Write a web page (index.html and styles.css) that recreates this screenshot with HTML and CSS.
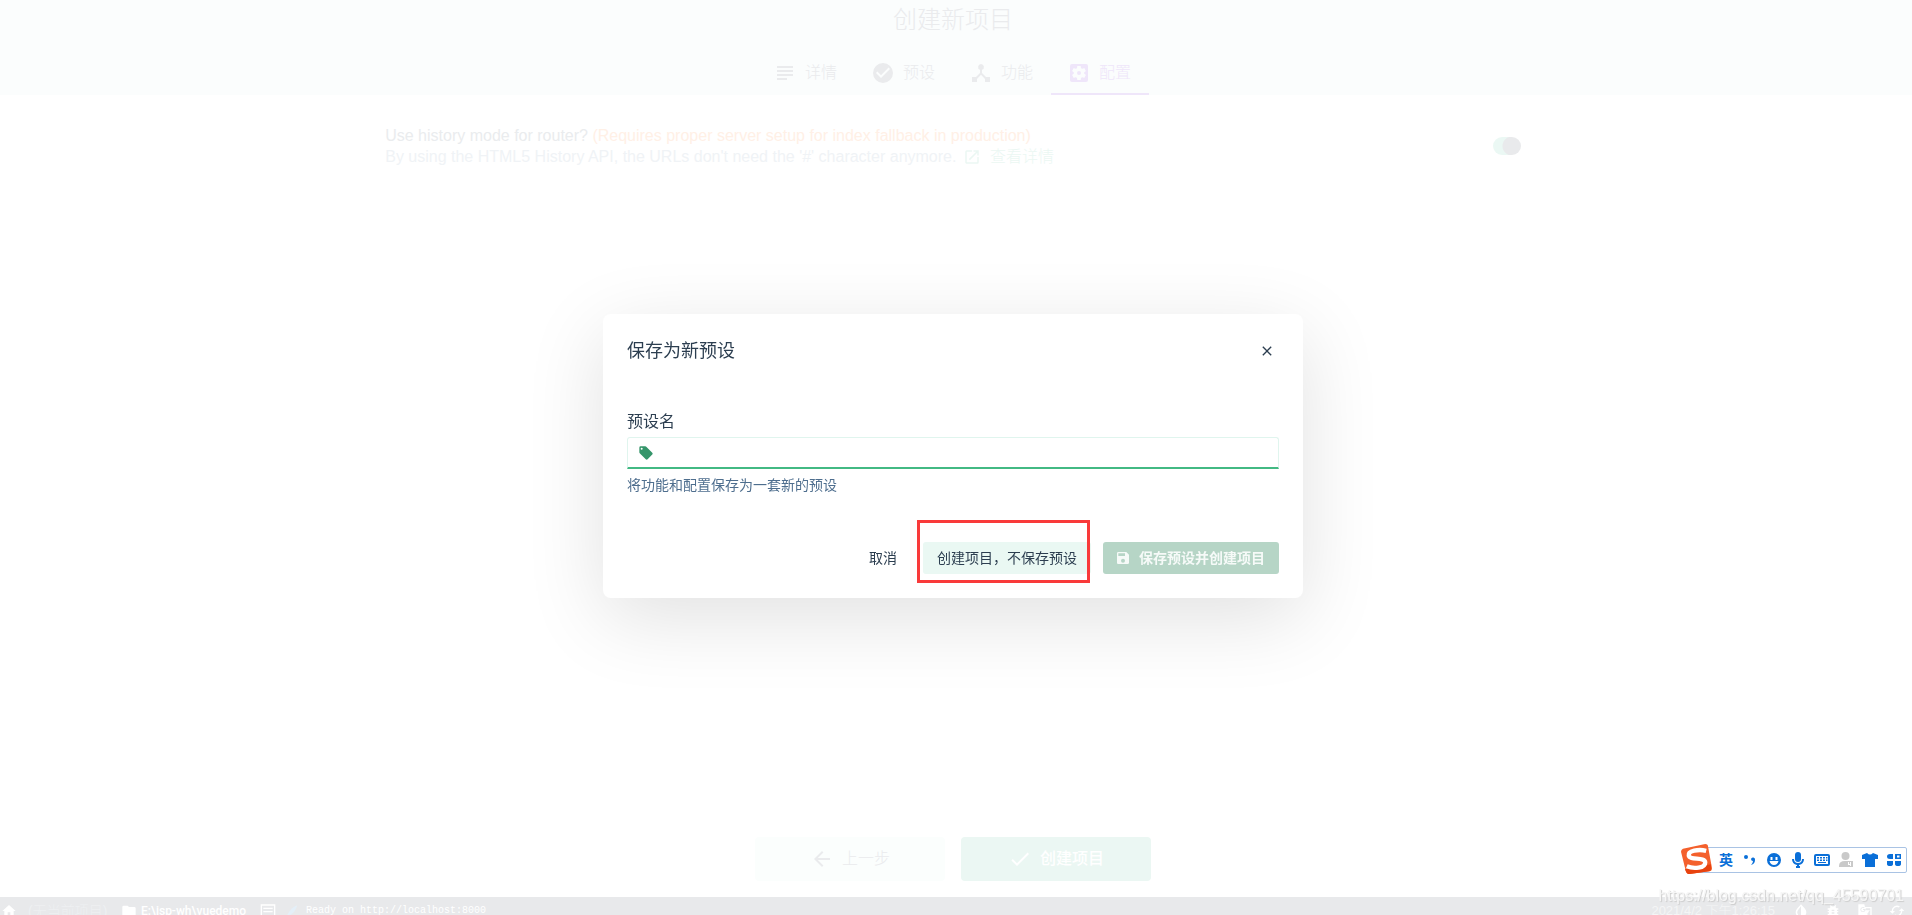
FILE: index.html
```html
<!DOCTYPE html>
<html lang="zh-CN">
<head>
<meta charset="utf-8">
<title>创建新项目</title>
<link rel="stylesheet" href="styles.css">
</head>
<body>
<div class="page">
  <header class="header">
    <h1 class="title">创建新项目</h1>
    <nav class="tabs">
      <button class="tab"><svg viewBox="0 0 24 24"><path d="M14 17H4v2h10zM20 9H4v2h16zM4 15h16v-2H4zM4 5v2h16V5z"/></svg>详情</button>
      <button class="tab"><svg viewBox="0 0 24 24"><path d="M12 2a10 10 0 1 0 0 20 10 10 0 0 0 0-20zm-2 15-5-5 1.4-1.4 3.6 3.6 7.6-7.6L19 8z"/></svg>预设</button>
      <button class="tab"><svg viewBox="0 0 24 24"><path d="m17 16-4-4V8.8A3 3 0 0 0 12 3a3 3 0 0 0-1 5.8V12l-4 4H3v5h5v-3l4-4.200 4 4.200v3h5v-5z"/></svg>功能</button>
      <button class="tab tab-active"><svg viewBox="0 0 24 24"><path d="M12 10a2 2 0 1 0 0 4 2 2 0 0 0 0-4zm7-7H5a2 2 0 0 0-2 2v14c0 1.100.9 2 2 2h14a2 2 0 0 0 2-2V5a2 2 0 0 0-2-2zm-1.750 9-.05.680 1.480 1.160c.13.110.17.300.08.450l-1.400 2.420c-.09.150-.27.210-.43.150l-1.740-.7c-.36.280-.75.510-1.180.690l-.26 1.850c-.03.170-.18.300-.35.300h-2.800c-.17 0-.32-.13-.35-.29l-.26-1.850c-.43-.18-.82-.41-1.180-.69l-1.740.7c-.16.060-.34 0-.43-.15l-1.400-2.420a.35.350 0 0 1 .08-.45l1.480-1.160L6.750 12l.05-.69-1.480-1.160a.35.350 0 0 1-.08-.45l1.400-2.420c.09-.15.27-.21.43-.15l1.740.7c.36-.28.75-.51 1.180-.69l.26-1.850c.03-.17.18-.29.35-.29h2.800c.17 0 .32.130.35.290l.26 1.850c.43.180.82.410 1.180.690l1.740-.7c.16-.06.34 0 .43.150l1.400 2.420c.09.150.05.340-.08.450l-1.480 1.160z"/></svg>配置</button>
    </nav>
  </header>

  <main class="content">
    <section class="prompt">
      <div class="prompt-text">
        <label for="history">Use history mode for router?</label> <span class="warn">(Requires proper server setup for index fallback in production)</span>
        <p class="hint">By using the HTML5 History API, the URLs don't need the '#' character anymore. <a class="more" href="#"><svg viewBox="0 0 24 24"><path d="M19 19H5V5h7V3H5a2 2 0 0 0-2 2v14c0 1.100.9 2 2 2h14a2 2 0 0 0 2-2v-7h-2zM14 3v2h3.600l-9.800 9.800 1.400 1.400L19 6.400V10h2V3z"/></svg>查看详情</a></p>
      </div>
      <input class="switch" type="checkbox" id="history" checked>
    </section>
  </main>

  <footer class="actions">
    <button class="big big-prev"><svg viewBox="0 0 24 24"><path d="M20 11H7.800l5.600-5.600L12 4l-8 8 8 8 1.400-1.400L7.800 13H20z"/></svg>上一步</button>
    <button class="big big-next"><svg viewBox="0 0 24 24"><path d="M9 16.200 4.800 12l-1.400 1.400L9 19 21 7l-1.400-1.400z"/></svg>创建项目</button>
  </footer>

  <div class="status">
    <div class="status-row">
      <svg viewBox="0 0 24 24"><path d="M10 20v-6h4v6h5v-8h3L12 3 2 12h3v8z"/></svg>
      <span class="no-project">(无当前项目)</span>
      <svg viewBox="0 0 24 24"><path d="M10 4H4a2 2 0 0 0-2 2v12c0 1.100.9 2 2 2h16a2 2 0 0 0 2-2V8a2 2 0 0 0-2-2h-8z"/></svg>
      <span class="path">E:\jsp-wh\vuedemo</span>
      <svg viewBox="0 0 24 24"><path fill-rule="evenodd" d="M1 2h22v18H1zM3 4v14h18V4zM5 7h14v2H5zM5 12h14v2H5z"/></svg>
      <svg class="brush" viewBox="0 0 24 24"><path d="M21 2C13 5 7 11 3 21l3-2c7-1 12-7 15-17z"/></svg>
      <span class="log">Ready on http://localhost:8000</span>
      <span class="date">2021/4/2 下午1:26:15</span>
      <span class="tools">
        <svg viewBox="0 0 24 24"><path fill-rule="evenodd" d="m12 2-6 6.500a8 8 0 1 0 12 0zM12 5v15a6 6 0 0 1-4-10z"/></svg>
        <svg viewBox="0 0 24 24"><path d="M20 8h-2.800a6 6 0 0 0-1.800-2L17 4.400 15.600 3l-2.200 2.200a6 6 0 0 0-2.800 0L8.400 3 7 4.400 8.600 6a6 6 0 0 0-1.800 2H4v2h2v2H4v2h2v2H4v2h2.800a6 6 0 0 0 10.400 0H20v-2h-2v-2h2v-2h-2v-2h2zm-6 8h-4v-2h4zm0-4h-4v-2h4z"/></svg>
        <svg viewBox="0 0 24 24"><path fill-rule="evenodd" d="M2 2h9l1 4h10v16H13l-1-4H2zM5 10a4 4 0 1 0 8-1H9v1.500h2.300A2.500 2.500 0 1 1 10.500 8l1-1A4 4 0 0 0 5 10zm8-2 3 10-2 2h6V8zM14 11h5v1h-1l-2 4-2-4z"/></svg>
        <svg viewBox="0 0 24 24"><path d="m19 8-4 4h3a6 6 0 0 1-8.800 5.300l-1.500 1.500A8 8 0 0 0 20 12h3zM6 12a6 6 0 0 1 8.800-5.300l1.500-1.500A8 8 0 0 0 4 12H1l4 4 4-4z"/></svg>
      </span>
    </div>
  </div>
</div>

<div class="overlay">
  <form class="modal" role="dialog" aria-labelledby="dlg">
    <div class="modal-head">
      <h2 class="modal-title" id="dlg">保存为新预设</h2>
      <button class="close" type="button" aria-label="关闭"><svg viewBox="0 0 24 24"><path d="M19 6.400 17.600 5 12 10.600 6.400 5 5 6.400l5.600 5.600L5 17.600 6.400 19l5.600-5.600 5.600 5.600 1.400-1.400-5.600-5.600z"/></svg></button>
    </div>
    <label class="label" for="preset">预设名</label>
    <div class="field">
      <svg viewBox="0 0 24 24"><path d="M21.400 11.600l-9-9A2 2 0 0 0 11 2H4a2 2 0 0 0-2 2v7c0 .55.220 1.050.590 1.420l9 9a2 2 0 0 0 2.820 0l7-7a2 2 0 0 0 0-2.820zM5.500 7a1.500 1.500 0 1 1 0-3 1.500 1.500 0 0 1 0 3z"/></svg>
      <input class="input" id="preset" type="text">
    </div>
    <p class="desc">将功能和配置保存为一套新的预设</p>
    <div class="modal-actions">
      <button class="btn btn-flat" type="button">取消</button>
      <span class="marked"><button class="btn btn-soft" type="button">创建项目，不保存预设</button></span>
      <button class="btn btn-save" type="button"><svg viewBox="0 0 24 24"><path d="M17 3H5a2 2 0 0 0-2 2v14c0 1.100.9 2 2 2h14a2 2 0 0 0 2-2V7zm-5 16a3 3 0 1 1 0-6 3 3 0 0 1 0 6zm3-10H5V5h10z"/></svg>保存预设并创建项目</button>
    </div>
  </form>
</div>

<div class="ime">
  <svg class="ime-logo" viewBox="0 0 32 32"><path fill="#f4602c" d="M2 5 25 0q3 0 3 3l4 22q0 3-3 3L9 31q-3 0-4-3L0 8q0-2 2-3z"/><path fill="#e8430f" d="M4 26 31 21v4q0 3-2 3L9 31q-3 0-4-3z"/><path fill="none" stroke="#fff" stroke-width="4.500" d="M26 7C18 5 7 7 8 12c1 5 17 1 17 7 0 6-12 7-19 4"/></svg>
  <div class="ime-bar">
    <span class="ime-cell">英</span>
    <span class="ime-cell"><svg viewBox="0 0 16 16"><circle cx="4" cy="5" r="2"/><path d="M9 7a2 2 0 1 1 4 1q0 4-4 5 2-2 2-4-2 0-2-2z"/></svg></span>
    <span class="ime-cell"><svg viewBox="0 0 16 16"><path fill-rule="evenodd" d="M8 1a7 7 0 1 0 0 14A7 7 0 0 0 8 1zM4.500 5h2v3h-2zM9.500 5h2v3h-2zM3.500 9h9q-1 4-4.500 4t-4.500-4z"/></svg></span>
    <span class="ime-cell"><svg viewBox="0 0 16 16"><rect x="5" y="0" width="6" height="10" rx="3"/><path d="M2 7h2q0 4 4 4t4-4h2q0 5-5 6v1H7v-1q-5-1-5-6zM6 14h4v2H6z"/></svg></span>
    <span class="ime-cell"><svg viewBox="0 0 16 16"><path fill-rule="evenodd" d="M2 2h12q2 0 2 2v8q0 2-2 2H2q-2 0-2-2V4q0-2 2-2zM2 4v8h12V4zM3 5h2v1.500H3zM6 5h2v1.500H6zM9 5h2v1.500H9zM12 5h1.500v1.500H12zM3 7.500h2V9H3zM6 7.500h2V9H6zM9 7.500h2V9H9zM12 7.500h1.500V9H12zM4 10h8v1H4z"/></svg></span>
    <span class="ime-cell ime-off"><svg viewBox="0 0 16 16"><circle cx="7.500" cy="4" r="4"/><path d="M1 14q0-5 6-5h8v6H1zM10 10v3h2v1h1v-4h-1v2h-1v-2z" fill-rule="evenodd"/></svg></span>
    <span class="ime-cell"><svg viewBox="0 0 16 16"><path d="M5 1q3 3 6 0l5 2v4h-3v8H3V7H0V3z"/></svg></span>
    <span class="ime-cell"><svg viewBox="0 0 16 16"><path fill-rule="evenodd" d="M4 2h3v5H4Q1 7 1 4.500T4 2zM9 2h6v5H9zM11 3.500v2h2.500v-2zM1 9h6v3q0 2-3 2t-3-2zM9 9h6v3q0 2-3 2t-3-2z"/></svg></span>
  </div>
</div>
<div class="watermark">https://blog.csdn.net/qq_45590701</div>
</body>
</html>
```

FILE: styles.css
```css
* { box-sizing: border-box; }

body {
  margin: 0;
  font: 16px/22px "Liberation Sans", "Noto Sans CJK SC", sans-serif;
  font-weight: 300;
  color: #2c3e50;
  background: #fff;
}

h1, h2, p { margin: 0; font-weight: inherit; }
button { margin: 0; padding: 0; border: 0; background: none; font: inherit; color: inherit; }
svg { fill: currentColor; flex: none; }

.page { display: flex; flex-direction: column; height: 100vh; overflow: hidden; }

.header { padding-right: 6px; background: #fbfdfd; color: #eaebed; }
.title { height: 49px; font-size: 24px; line-height: 40px; text-align: center; }
.tabs { display: flex; justify-content: center; }
.tab {
  display: flex; align-items: center; gap: 8px;
  width: 98px; height: 46px; padding: 3px 16px 0;
  border-bottom: 2px solid transparent;
  white-space: nowrap;
}
.tab svg { width: 24px; height: 24px; }
.tab-active { color: #efe6fa; border-color: #efe6fa; }

.content { flex: 1; min-height: 0; padding: 30px 6px 0 0; }
.prompt {
  display: flex; align-items: center; justify-content: space-between;
  width: 60%; min-width: 700px; margin: 0 auto;
  padding: 0 4px;
  color: #eaecee;
  line-height: 21px;
}
.warn { color: #fff0e6; }
.hint { color: #f0f3f6; }
.more { margin-left: 2px; color: #ebf7f3; text-decoration: none; }
.more svg { width: 18px; height: 18px; margin-right: 9px; vertical-align: -4px; }
.switch {
  appearance: none;
  width: 28px; height: 18px; margin: 0;
  border-radius: 9px;
  background: radial-gradient(circle at 19px 9px, #e9eaec 9px, #ebf8f4 10px);
}

.actions { display: flex; justify-content: center; gap: 16px; padding: 0 6px 16px 0; }
.big {
  display: flex; align-items: center; justify-content: center; gap: 8px;
  width: 190px; height: 44px; border-radius: 4px;
}
.big svg { width: 24px; height: 24px; }
.big-prev { background: #fbfefd; color: #eaebed; }
.big-next { background: #ebf7f3; color: #fff; font-weight: 500; }

.status { flex: none; height: 18px; overflow: hidden; background: #e8e9eb; color: #fff; }
.status-row { display: flex; align-items: center; height: 28px; font-size: 14px; white-space: nowrap; }
.status svg { width: 16px; height: 16px; }
.status-row > svg { margin-left: 1px; }
.no-project { width: 92px; margin-left: 11px; color: #eef0f2; }
.path { width: 118px; margin-left: 4px; font-family: Roboto, sans-serif; font-size: 12px; font-weight: 500; }
.status .brush { width: 14px; margin: 0 7px 0 9px; color: #e4eff8; }
.log { font: 10px/14px "Liberation Mono", monospace; }
.date { margin-left: auto; font-size: 13px; color: #f4f5f6; }
.tools { display: flex; gap: 16px; margin: 0 7px 0 18px; }

.overlay {
  position: fixed; inset: 0;
  display: flex; align-items: center; justify-content: center;
  padding: 0 6px 3px 0;
}
.modal {
  width: 700px; padding: 24px;
  border-radius: 8px; background: #fff;
  box-shadow: 0 20px 80px rgba(0, 0, 0, .12);
  font-weight: 400;
}
.modal-head { display: flex; align-items: center; justify-content: space-between; height: 26px; margin-bottom: 46px; }
.modal-title { font-size: 18px; }
.close { display: flex; padding: 4px; }
.close svg { width: 16px; height: 16px; }
.label { display: block; height: 27px; line-height: 24px; }
.field {
  display: flex; align-items: center; gap: 8px;
  height: 32px; padding: 0 10px;
  border: 1px solid #e0f5ee; border-bottom: 2px solid #42b983;
  border-radius: 3px 3px 0 0;
  color: #35956a;
}
.field svg { width: 16px; height: 16px; }
.input { flex: 1; height: 24px; border: 0; outline: 0; background: none; font: inherit; }
.desc { padding-top: 5px; font-size: 14px; color: #4e6e8e; }
.modal-actions { display: flex; justify-content: flex-end; gap: 12px; padding-top: 46px; }
.btn {
  display: flex; align-items: center; gap: 8px;
  height: 32px; padding: 0 14px; border-radius: 3px;
  font-size: 14px; white-space: nowrap;
}
.btn svg { width: 16px; height: 16px; }
.btn-soft { background: #eaf8f3; }
.btn-save { padding: 0 14px 0 12px; background: #b6d5c6; color: #f6faf8; font-weight: 700; }
.marked { position: relative; }
.marked::after {
  content: "";
  position: absolute; inset: -22px 1px -9px -6px;
  border: 3px solid #f93a3a;
}

.ime { position: fixed; right: 5px; bottom: 40px; display: flex; align-items: center; }
.ime-logo { position: relative; width: 31px; height: 31px; margin-right: -15px; }
.ime-bar {
  display: flex; align-items: center;
  height: 26px; padding-left: 16px;
  border: 1px solid #a9c3e4; border-radius: 2px; background: #fff;
  color: #0a6fd8;
}
.ime-cell { display: flex; justify-content: center; width: 24px; font-size: 14px; font-weight: 700; }
.ime-cell svg { width: 16px; height: 16px; }
.ime-off { color: #c9c9c9; }

.watermark {
  position: fixed; right: 8px; bottom: 8px;
  color: #f6f6f6; text-shadow: 1px 1px 1px #ccc;
}
```
